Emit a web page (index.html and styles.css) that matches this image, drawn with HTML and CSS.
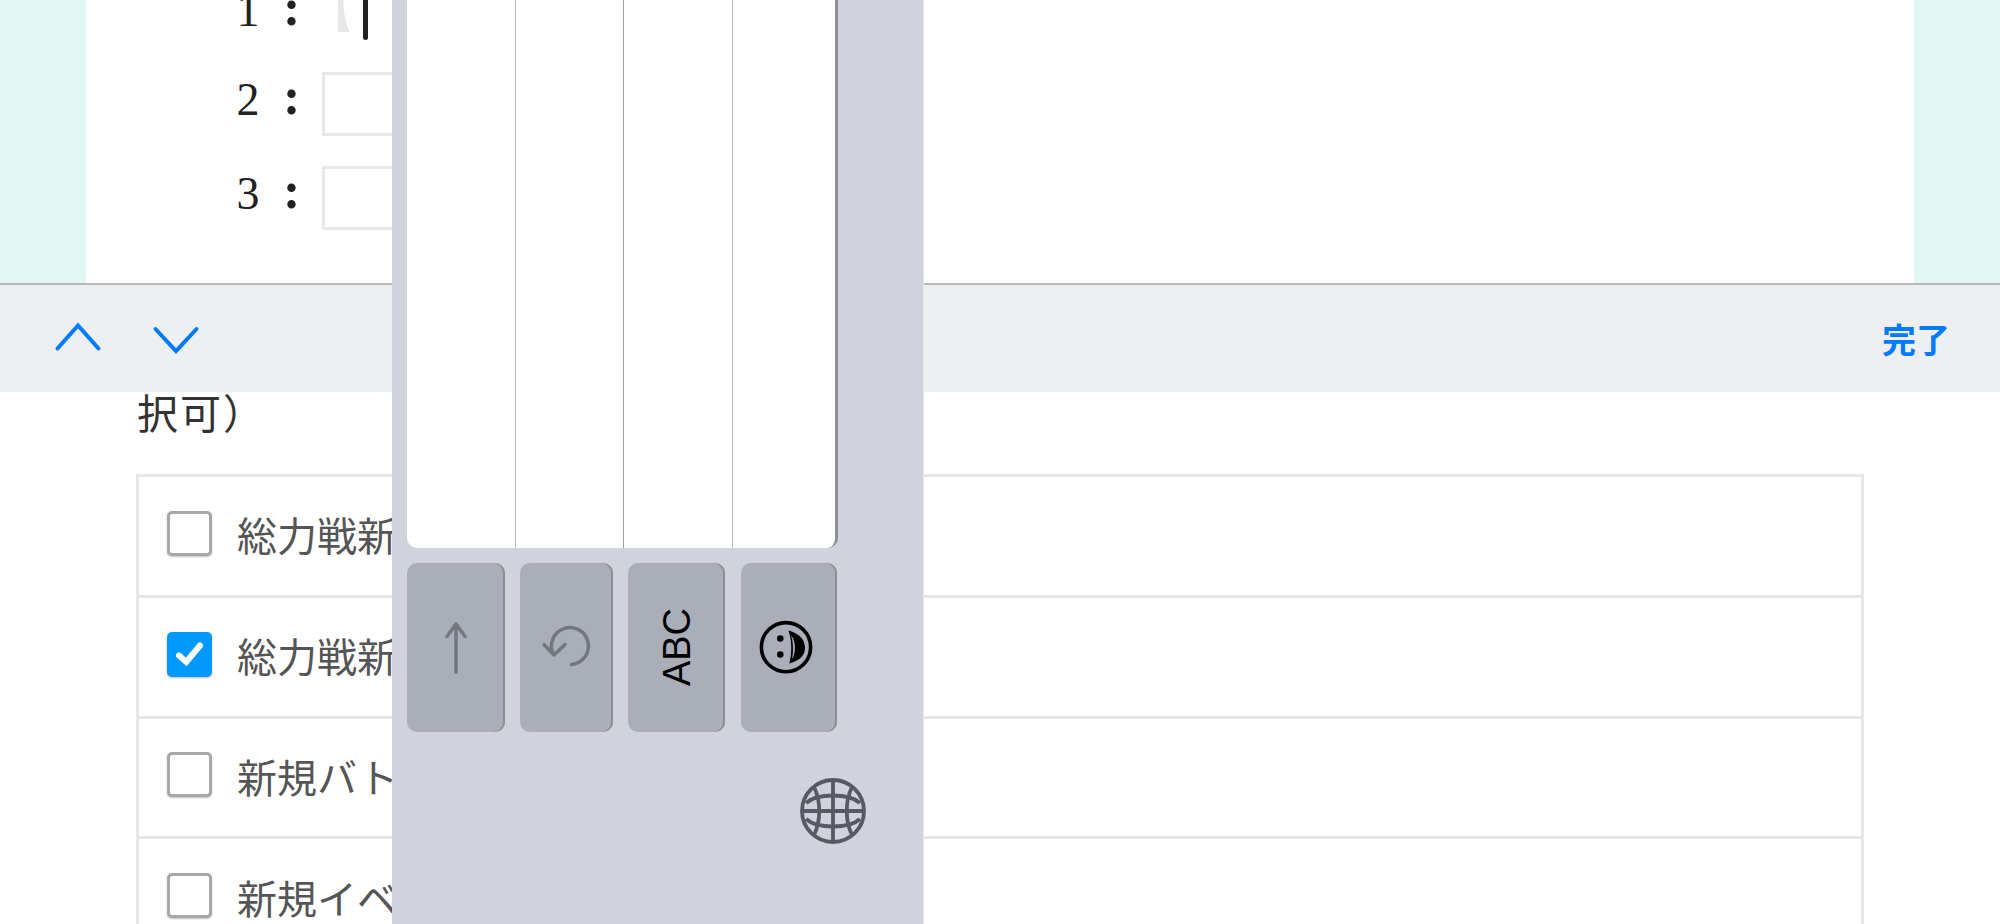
FILE: index.html
```html
<!DOCTYPE html>
<html lang="ja">
<head>
<meta charset="utf-8">
<title>フォーム</title>
<link rel="stylesheet" href="styles.css">
</head>
<body>
<div class="page">
  <section class="top">
    <div class="card">
      <div class="form-rows">
        <div class="rank rank-first">
          <span class="digit">1</span><span class="colon">:</span>
          <svg class="focus-field" width="70" height="64" viewBox="0 0 70 64">
            <path d="M16 0H23C20 16 21 36 28 49H16Z" fill="#e6e6e6"/>
            <rect x="41" y="0" width="5" height="57" rx="2.5" fill="#222"/>
          </svg>
        </div>
        <div class="rank"><span class="digit">2</span><span class="colon">:</span><div class="field"></div></div>
        <div class="rank"><span class="digit">3</span><span class="colon">:</span><div class="field"></div></div>
      </div>
    </div>
  </section>

  <div class="toolbar">
    <div class="nav">
      <svg class="chev" width="48" height="36" viewBox="0 0 48 36"><path d="M3.500 27.500L24 4.500L44.500 27.500"/></svg>
      <svg class="chev" width="48" height="36" viewBox="0 0 48 36"><path d="M3.500 8L24 30L44.500 8"/></svg>
    </div>
    <span class="done">完了</span>
  </div>

  <section class="lower">
    <p class="hint">択可）</p>
    <div class="options">
      <div class="option"><span class="box"></span><span class="label">総力戦新</span></div>
      <div class="option"><span class="box box-on"><svg width="44" height="44" viewBox="0 0 44 44"><path d="M12 23.500L19.300 30L33 13.500"/></svg></span><span class="label">総力戦新</span></div>
      <div class="option"><span class="box"></span><span class="label">新規バト</span></div>
      <div class="option"><span class="box"></span><span class="label">新規イベ</span></div>
    </div>
  </section>

  <aside class="keyboard">
    <div class="candidates">
      <div class="cand"></div><div class="cand"></div><div class="cand"></div><div class="cand"></div>
    </div>
    <div class="keys">
      <div class="key key-a">
        <svg width="40" height="60" viewBox="0 0 40 60"><path class="dim" d="M20 54V6M11 18.500L20 6L29 18.500"/></svg>
      </div>
      <div class="key key-b">
        <svg width="60" height="60" viewBox="0 0 60 60"><path class="dim" d="M34.500 46.500A18.500 18.500 0 1 0 16.500 36.500M7 26.500L17 37L28 26.500"/></svg>
      </div>
      <div class="key key-c"><span class="abc">ABC</span></div>
      <div class="key key-d">
        <svg width="60" height="60" viewBox="0 0 60 60">
          <g transform="translate(-2 -0.5)">
            <circle cx="29" cy="29.700" r="24.600" fill="none" stroke="#000" stroke-width="3.600"/>
            <circle cx="23.300" cy="21" r="3.300" fill="#000"/>
            <circle cx="23.300" cy="37" r="3.300" fill="#000"/>
            <path d="M31.500 13C43 16 48 23 48 30C48 38 43 43 32.300 46C35 36 35 23 31.500 13Z" fill="#000"/>
            <path d="M34 17.500C36.500 25 36.500 34 35 41.500C38.500 37 39.500 24 34 17.500Z" fill="#a9aeb9"/>
          </g>
        </svg>
      </div>
    </div>
    <div class="globe-row">
      <svg width="70" height="70" viewBox="-35 -35 70 70" fill="none" stroke="#555a63" stroke-width="3.800">
        <circle r="31"/>
        <path d="M0 -31V31M-31 0H31"/>
        <path d="M-27 -8C-16 -18 16 -18 27 -8M-27 8C-16 18 16 18 27 8"/>
        <path d="M-19 -24C-12 -10 -12 10 -19 24M19 -24C12 -10 12 10 19 24"/>
      </svg>
    </div>
  </aside>
</div>
</body>
</html>
```
FILE: styles.css
```css
* { box-sizing: border-box; }
html, body { margin: 0; height: 100%; overflow: hidden; background: #fff; }
.page { position: relative; width: 2000px; height: 924px; overflow: hidden; font-family: "Noto Sans CJK JP", "Noto Sans", sans-serif; }

.top { height: 283px; background: #e3f7f5; padding: 0 86px; overflow: hidden; }
.card { height: 100%; background: #fff; padding-left: 150px; }
.form-rows { display: flex; flex-direction: column; gap: 30px; margin-top: -17px; }
.card::before { content: ""; display: table; }
.rank { display: flex; align-items: center; gap: 24px; height: 64px; color: #222; font-family: "Liberation Serif", serif; font-size: 46px; line-height: 1; }
.rank-first { margin-bottom: -5px; }
.digit { width: 24px; text-align: center; padding-bottom: 8px; }
.colon { width: 13px; margin: 0 2px 0 -1px; text-align: center; font-size: 52px; font-weight: 700; padding-bottom: 14px; }
.field { width: 300px; height: 64px; border: 3px solid #e8e8e8; background: #fff; }
.focus-field { flex: none; }

.toolbar { height: 109px; background: #eeeff1; border-top: 2px solid #b9b9b9; display: flex; align-items: center; justify-content: space-between; padding: 0 50px 0 54px; }
.nav { display: flex; gap: 50px; }
.chev path { fill: none; stroke: #007aff; stroke-width: 4; stroke-linecap: round; stroke-linejoin: miter; }
.done { color: #007aff; font-size: 34px; font-weight: 700; line-height: 1; }

.lower { height: 532px; background: #fff; padding: 0 136px; }
.hint { margin: 0; height: 82px; color: #333; font-size: 41px; line-height: 38px; letter-spacing: 2px; padding-left: 1px; }
.options { border: 3px solid #e6e6e6; border-bottom: 0; }
.option { display: flex; align-items: center; gap: 24px; height: 120.800px; padding-left: 28px; border-bottom: 3px solid #e6e6e6; }
.box { flex: none; width: 45px; height: 45px; margin-top: -5px; border: 3px solid #a8a8a8; border-radius: 5px; background: #fff; box-shadow: 0 1px 2px rgba(0, 0, 0, .25); }
.box-on { border: 0; background: #09f; display: block; }
.box-on svg { display: block; }
.box-on path { fill: none; stroke: #fff; stroke-width: 6; stroke-linecap: round; stroke-linejoin: miter; }
.label { color: #555; font-size: 40px; line-height: 1; white-space: nowrap; margin: -3px 0 0 1px; }

.keyboard { position: absolute; left: 392px; top: 0; width: 532px; height: 924px; background: #d0d3db; border-right: 1px solid #e4e5e9; padding-left: 15px; }
.candidates { width: 431px; height: 548px; display: flex; background: #fff; border-right: 3px solid #8d8f94; border-radius: 0 0 10px 10px; overflow: hidden; }
.cand { flex: none; border-right: 1px solid #bdbdbd; }
.cand:last-child { border-right: 0; flex: 1 1 0; }
.cand:nth-child(1) { width: 109px; }
.cand:nth-child(2) { width: 108px; border-right-color: #a0a0a0; }
.cand:nth-child(3) { width: 109px; }
.keys { display: flex; gap: 15px; margin-top: 15px; height: 169px; width: 431px; }
.key { display: flex; align-items: center; justify-content: center; background: #a9aeb9; border-radius: 10px; box-shadow: inset -2px 0 0 #8b8e95; }
.key-a { width: 98px; }
.key-b { width: 93px; }
.key-c { width: 97px; }
.key-d { width: 96px; margin-left: 1px; }
.key svg { display: block; }
.dim { fill: none; stroke: #72767d; stroke-width: 3.500; stroke-linecap: round; stroke-linejoin: round; }
.abc { display: block; color: #000; font-family: "Liberation Sans", sans-serif; font-size: 38px; line-height: 1; transform: translate(1px, -1px) rotate(-90deg); }
.globe-row { margin: 44px 0 0 391px; }
.globe-row svg { display: block; }
```
